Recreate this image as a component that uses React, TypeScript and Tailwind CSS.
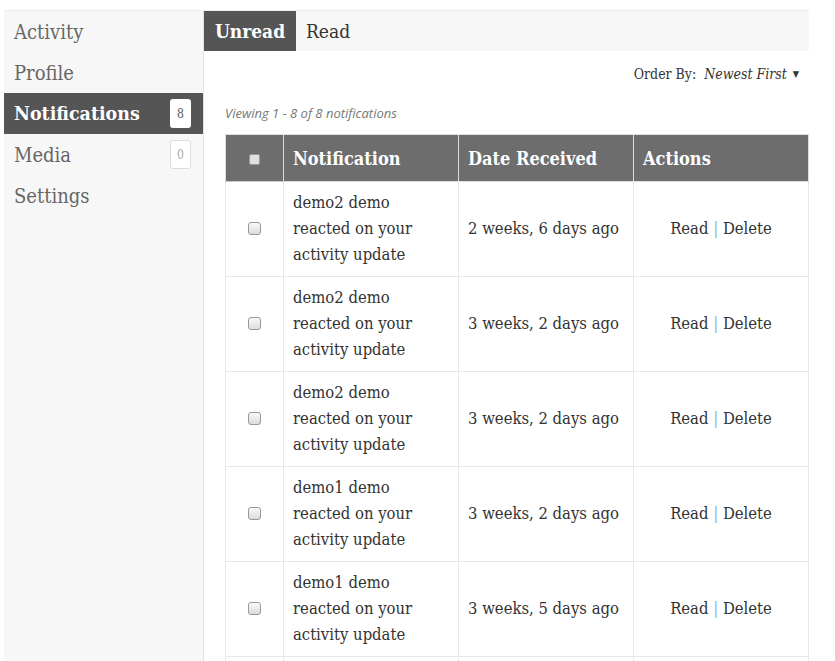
import React from "react";

const serif = { fontFamily: '"DejaVu Serif Condensed", "DejaVu Serif", serif' };

const rows = [
  { who: "demo2 demo", when: "2 weeks, 6 days ago" },
  { who: "demo2 demo", when: "3 weeks, 2 days ago" },
  { who: "demo2 demo", when: "3 weeks, 2 days ago" },
  { who: "demo1 demo", when: "3 weeks, 2 days ago" },
  { who: "demo1 demo", when: "3 weeks, 5 days ago" },
  { who: "demo1 demo", when: "3 weeks, 5 days ago" },
];

function Box() {
  return (
    <span className="inline-block w-[13px] h-[13px] rounded-[3px] border border-[#999] bg-gradient-to-b from-[#fafafa] to-[#dcdcdc]" />
  );
}

export default function App() {
  return (
    <div className="w-[835px] h-[661px] overflow-hidden bg-white text-[#555]" style={serif}>
      <div className="flex ml-[4px] mt-[10px] w-[804px] border-t border-[#ececec] h-[651px]">
        <aside className="w-[200px] shrink-0 bg-[#f7f7f7] border-r border-[#e2e2e2]">
          {[
            { l: "Activity" },
            { l: "Profile" },
            { l: "Notifications", active: true, n: "8" },
            { l: "Media", n: "0" },
            { l: "Settings" },
          ].map((it) => (
            <div
              key={it.l}
              className={
                "h-[41px] flex items-center justify-between pl-[10px] pr-[12px] " +
                (it.active ? "bg-[#555] text-white font-bold text-[19.4px]" : "text-[#666] text-[20px]")
              }
            >
              <span>{it.l}</span>
              {it.n && (
                <span
                  className={
                    "w-[21px] h-[29px] flex items-center justify-center rounded-[3px] text-[12px] font-normal " +
                    (it.active ? "bg-white text-[#555]" : "border border-[#ddd] bg-white text-[#aaa]")
                  }
                >
                  {it.n}
                </span>
              )}
            </div>
          ))}
        </aside>
        <main className="flex-1">
          <div className="h-[40px] bg-[#f7f7f7] flex text-[19px]">
            <div className="w-[92px] bg-[#555] text-white font-bold flex items-center justify-center">Unread</div>
            <div className="px-[10px] flex items-center text-[#333]">Read</div>
          </div>
          <div className="flex justify-end items-center h-[47px] pr-[10px] text-[14px] text-[#333]">
            <span>Order By:</span>
            <span className="italic ml-[8px]">Newest First</span>
            <span className="ml-[6px] text-[9px]">▼</span>
          </div>
          <div
            className="pl-[21px] h-[36px] pb-[4px] flex items-center text-[13px] italic text-[#777]"
            style={{ fontFamily: '"Open Sans", sans-serif' }}
          >
            Viewing 1 - 8 of 8 notifications
          </div>
          <table className="ml-[21px] w-[583px] border-collapse table-fixed text-[16.5px] text-[#333]">
            <colgroup>
              <col className="w-[58px]" />
              <col className="w-[175px]" />
              <col className="w-[175px]" />
              <col className="w-[175px]" />
            </colgroup>
            <thead>
              <tr className="h-[47px] bg-[#6d6d6d] text-white text-[18px] font-bold">
                <th className="border border-[#ddd] border-b-[#c8c8c8]">
                  <span className="inline-block w-[11px] h-[11px] mt-[4px] rounded-[2px] border border-[#999] bg-[#e0e0e0]" />
                </th>
                <th className="border border-[#ddd] text-left pl-[9px]">Notification</th>
                <th className="border border-[#ddd] text-left pl-[9px]">Date Received</th>
                <th className="border border-[#ddd] text-left pl-[9px]">Actions</th>
              </tr>
            </thead>
            <tbody>
              {rows.map((r, i) => (
                <tr key={i} className="h-[95px]">
                  <td className="border border-[#e8e8e8] text-center align-middle">
                    <span className="inline-flex mt-[6px]"><Box /></span>
                  </td>
                  <td className="border border-[#e8e8e8] pl-[9px] pr-[8px] leading-[26px]">
                    {r.who}
                    <br />
                    reacted on your
                    <br />
                    activity update
                  </td>
                  <td className="border border-[#e8e8e8] pl-[9px]">{r.when}</td>
                  <td className="border border-[#e8e8e8] text-center">
                    Read <span className="text-[#7cb7e0]">|</span> Delete
                  </td>
                </tr>
              ))}
            </tbody>
          </table>
        </main>
      </div>
    </div>
  );
}
